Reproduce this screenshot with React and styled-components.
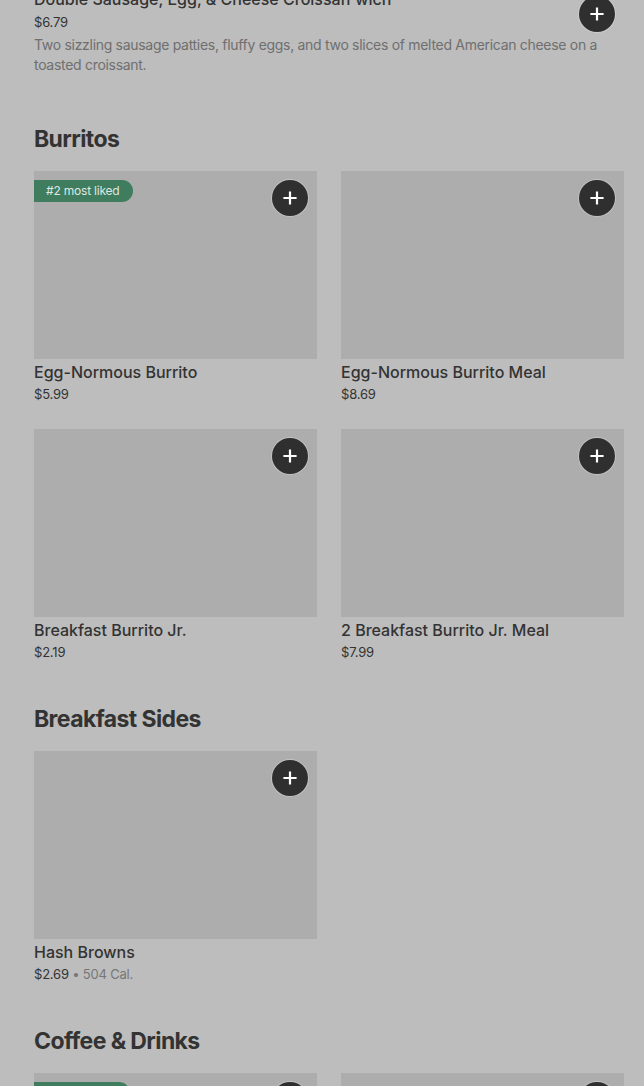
import React from 'react'
import styled, { createGlobalStyle } from 'styled-components'

const GlobalStyle = createGlobalStyle`
  html, body {
    margin: 0;
    padding: 0;
    background: #bdbdbd;
  }
  body {
    font-family: Inter, 'Noto Sans', 'Liberation Sans', sans-serif;
    color: #333333;
    overflow: hidden;
  }
`

const sections = [
  {
    title: 'Burritos',
    items: [
      { name: 'Egg-Normous Burrito', price: '$5.99', badge: '#2 most liked' },
      { name: 'Egg-Normous Burrito Meal', price: '$8.69' },
      { name: 'Breakfast Burrito Jr.', price: '$2.19' },
      { name: '2 Breakfast Burrito Jr. Meal', price: '$7.99' },
    ],
  },
  {
    title: 'Breakfast Sides',
    items: [{ name: 'Hash Browns', price: '$2.69', cal: '504 Cal.' }],
  },
  {
    title: 'Coffee & Drinks',
    items: [
      { name: 'Iced Coffee', price: '$2.49', badge: '#1 most liked' },
      { name: 'Premium Roast Coffee', price: '$1.99' },
    ],
  },
]

const PlusIcon = () => (
  <svg width="14" height="14" viewBox="0 0 14 14" fill="none">
    <path d="M7 1.5v11M1.5 7h11" stroke="#ffffff" strokeWidth="2.2" strokeLinecap="square" />
  </svg>
)

const App = () => (
  <Page>
    <GlobalStyle />
    <ListItem>
      <ItemText>
        <ItemTitle>Double Sausage, Egg, &amp; Cheese Croissan'wich</ItemTitle>
        <ListPrice>$6.79</ListPrice>
        <Description>
          Two sizzling sausage patties, fluffy eggs, and two slices of melted American cheese on a
          toasted croissant.
        </Description>
      </ItemText>
      <AddButton $top="7px"><PlusIcon /></AddButton>
    </ListItem>

    {sections.map((section) => (
      <Section key={section.title}>
        <Heading>{section.title}</Heading>
        <Grid>
          {section.items.map((item) => (
            <Card key={item.name}>
              <Thumb>
                {item.badge && <Badge>{item.badge}</Badge>}
                <AddButton $top="9px"><PlusIcon /></AddButton>
              </Thumb>
              <CardTitle>{item.name}</CardTitle>
              <Price>
                {item.price}
                {item.cal && <Cal> • {item.cal}</Cal>}
              </Price>
            </Card>
          ))}
        </Grid>
      </Section>
    ))}
  </Page>
)

const Page = styled.div`
  margin-top: -11px;
  padding: 0 20px 0 34px;
`
const ListItem = styled.div`
  position: relative;
  padding-bottom: 8px;
`
const ItemText = styled.div`
  padding-right: 20px;
`
const ItemTitle = styled.div`
  font-size: 16px;
  line-height: 20px;
  font-weight: 500;
  color: #333333;
  white-space: nowrap;
`
const Price = styled.div`
  font-size: 13px;
  line-height: 22px;
  color: #333333;
  letter-spacing: -0.2px;
`
const ListPrice = styled(Price)`
  margin-top: 2px;
`
const Cal = styled.span`
  color: #777777;
`
const Description = styled.p`
  margin: 2px 0 0;
  font-size: 14px;
  line-height: 20px;
  color: #6f6f6f;
  letter-spacing: -0.3px;
`
const Section = styled.section`
  margin-top: 40px;
`
const Heading = styled.h2`
  margin: 0 0 16px;
  font-size: 23px;
  line-height: 32px;
  font-weight: 700;
  letter-spacing: -0.6px;
  color: #333333;
`
const Grid = styled.div`
  display: grid;
  grid-template-columns: 283px 283px;
  column-gap: 24px;
  row-gap: 24px;
`
const Card = styled.div`
  display: flex;
  flex-direction: column;
`
const Thumb = styled.div`
  position: relative;
  height: 188px;
  background: #adadad;
`
const Badge = styled.span`
  position: absolute;
  top: 9px;
  left: 0;
  height: 22px;
  padding: 0 13px 0 12px;
  border-radius: 0 11px 11px 0;
  background: #3f7d5e;
  color: #dfe7e2;
  font-size: 12px;
  line-height: 22px;
  letter-spacing: -0.2px;
`
const AddButton = styled.button`
  position: absolute;
  top: ${(p) => p.$top};
  right: 9px;
  width: 36px;
  height: 36px;
  border: none;
  padding: 0;
  border-radius: 50%;
  background: #2f2f2f;
  box-shadow: 0 0 0 1px rgba(255, 255, 255, 0.25);
  display: flex;
  align-items: center;
  justify-content: center;
`
const CardTitle = styled.div`
  margin-top: 2px;
  font-size: 16px;
  line-height: 22px;
  font-weight: 500;
  color: #333333;
`

export default App
